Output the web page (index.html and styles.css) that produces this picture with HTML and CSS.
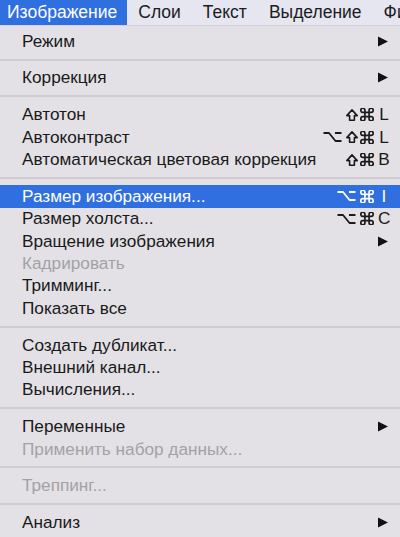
FILE: index.html
```html
<!DOCTYPE html>
<html lang="ru">
<head>
<meta charset="utf-8">
<link rel="stylesheet" href="styles.css">
</head>
<body>
<div class="menubar">
  <span class="mb-item active">Изображение</span>
  <span class="mb-item">Слои</span>
  <span class="mb-item">Текст</span>
  <span class="mb-item">Выделение</span>
  <span class="mb-item">Фи</span>
</div>
<div class="menu">
  <div class="row"><span class="label">Режим</span><svg class="arrow" viewBox="0 0 10 10"><polygon points="0,0 10,5 0,10"/></svg></div>
  <div class="sep"></div>
  <div class="row"><span class="label">Коррекция</span><svg class="arrow" viewBox="0 0 10 10"><polygon points="0,0 10,5 0,10"/></svg></div>
  <div class="sep"></div>
  <div class="row"><span class="label">Автотон</span><span class="sc"><svg class="shift" viewBox="0 0 12 12"><path d="M6 0.9 L11.2 6.6 H8.4 V11.2 H3.6 V6.6 H0.8 Z"/></svg><svg class="cmd" viewBox="2.6 2.6 18.8 18.8"><path d="M15 6v12a3 3 0 1 0 3-3H6a3 3 0 1 0 3 3V6a3 3 0 1 0-3 3h12a3 3 0 1 0-3-3"/></svg><span class="l">L</span></span></div>
  <div class="row"><span class="label">Автоконтраст</span><span class="sc"><svg class="opt" viewBox="0 0 19 10"><path d="M0.5 1 H6 L12.5 9 H18.5 M12 1 H18.5"/></svg><svg class="shift" viewBox="0 0 12 12"><path d="M6 0.9 L11.2 6.6 H8.4 V11.2 H3.6 V6.6 H0.8 Z"/></svg><svg class="cmd" viewBox="2.6 2.6 18.8 18.8"><path d="M15 6v12a3 3 0 1 0 3-3H6a3 3 0 1 0 3 3V6a3 3 0 1 0-3 3h12a3 3 0 1 0-3-3"/></svg><span class="l">L</span></span></div>
  <div class="row"><span class="label">Автоматическая цветовая коррекция</span><span class="sc"><svg class="shift" viewBox="0 0 12 12"><path d="M6 0.9 L11.2 6.6 H8.4 V11.2 H3.6 V6.6 H0.8 Z"/></svg><svg class="cmd" viewBox="2.6 2.6 18.8 18.8"><path d="M15 6v12a3 3 0 1 0 3-3H6a3 3 0 1 0 3 3V6a3 3 0 1 0-3 3h12a3 3 0 1 0-3-3"/></svg><span class="l">B</span></span></div>
  <div class="sep"></div>
  <div class="row selected"><span class="label">Размер изображения...</span><span class="sc"><svg class="opt" viewBox="0 0 19 10"><path d="M0.5 1 H6 L12.5 9 H18.5 M12 1 H18.5"/></svg><svg class="cmd" viewBox="2.6 2.6 18.8 18.8"><path d="M15 6v12a3 3 0 1 0 3-3H6a3 3 0 1 0 3 3V6a3 3 0 1 0-3 3h12a3 3 0 1 0-3-3"/></svg><span class="l">I</span></span></div>
  <div class="row"><span class="label">Размер холста...</span><span class="sc"><svg class="opt" viewBox="0 0 19 10"><path d="M0.5 1 H6 L12.5 9 H18.5 M12 1 H18.5"/></svg><svg class="cmd" viewBox="2.6 2.6 18.8 18.8"><path d="M15 6v12a3 3 0 1 0 3-3H6a3 3 0 1 0 3 3V6a3 3 0 1 0-3 3h12a3 3 0 1 0-3-3"/></svg><span class="l">C</span></span></div>
  <div class="row"><span class="label">Вращение изображения</span><svg class="arrow" viewBox="0 0 10 10"><polygon points="0,0 10,5 0,10"/></svg></div>
  <div class="row disabled"><span class="label">Кадрировать</span></div>
  <div class="row"><span class="label">Тримминг...</span></div>
  <div class="row"><span class="label">Показать все</span></div>
  <div class="sep"></div>
  <div class="row"><span class="label">Создать дубликат...</span></div>
  <div class="row"><span class="label">Внешний канал...</span></div>
  <div class="row"><span class="label">Вычисления...</span></div>
  <div class="sep"></div>
  <div class="row"><span class="label">Переменные</span><svg class="arrow" viewBox="0 0 10 10"><polygon points="0,0 10,5 0,10"/></svg></div>
  <div class="row disabled"><span class="label">Применить набор данных...</span></div>
  <div class="sep"></div>
  <div class="row disabled"><span class="label">Треппинг...</span></div>
  <div class="sep"></div>
  <div class="row"><span class="label">Анализ</span><svg class="arrow" viewBox="0 0 10 10"><polygon points="0,0 10,5 0,10"/></svg></div>
</div>
</body>
</html>
```
FILE: styles.css
```css
html, body {
  margin: 0;
  padding: 0;
  background: #e3e1e5;
  overflow: hidden;
}
body {
  width: 400px;
  height: 537px;
  font-family: "Liberation Sans", Arial, sans-serif;
  color: #1a1a1a;
}
.menubar {
  height: 25px;
  background: #e5e6f0;
  display: flex;
  align-items: center;
  white-space: nowrap;
  overflow: hidden;
  font-size: 17.5px;
  color: #1c1c1e;
}
.mb-item {
  height: 25px;
  line-height: 25px;
  padding: 0 11px;
  flex: none;
}
.mb-item.active {
  background: #2f6fdf;
  color: #fff;
  padding: 0 10px 0 7px;
}
.menu {
  border-top: 1px solid #d2d0d6;
  padding-top: 4px;
  background: #e3e1e5;
}
.row {
  height: 22.4px;
  display: flex;
  align-items: center;
  justify-content: space-between;
  padding: 0 10px 0 22px;
  font-size: 17.2px;
  white-space: nowrap;
}
.row.selected {
  background: #2f6fdf;
  color: #fff;
}
.row.disabled {
  color: #a3a1a6;
}
.sep {
  height: 14.4px;
  display: flex;
  align-items: center;
}
.sep::before {
  content: "";
  display: block;
  width: 100%;
  height: 2px;
  background: #cfcdd2;
}
.arrow {
  width: 10px;
  height: 11px;
  fill: #111;
  margin-right: 2px;
}
.sc {
  display: flex;
  align-items: center;
}
.sc svg {
  fill: none;
  stroke: currentColor;
  stroke-linejoin: round;
  flex: none;
}
.opt {
  width: 19px;
  height: 10px;
  stroke-width: 1.8;
  margin-right: 4px;
}
.shift {
  width: 12px;
  height: 12px;
  stroke-width: 1.6;
  margin-right: 2px;
}
.cmd {
  width: 14px;
  height: 13px;
  stroke-width: 2.4;
}
.l {
  width: 12px;
  margin-left: 4px;
  text-align: center;
  font-size: 17.2px;
}
```
